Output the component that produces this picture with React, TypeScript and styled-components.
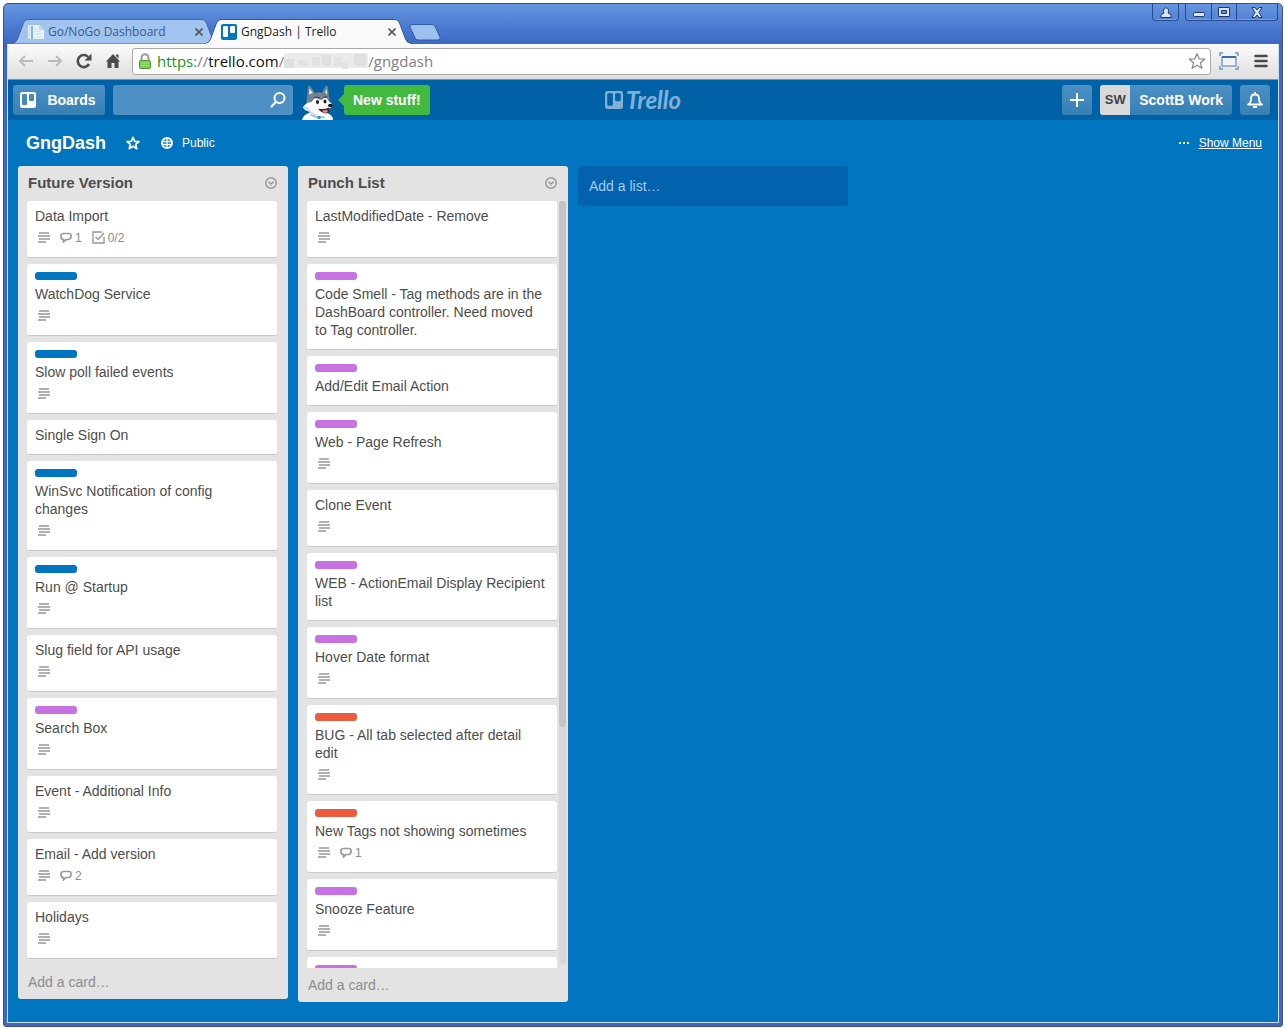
import React from "react";
import styled, { createGlobalStyle } from "styled-components";

const sans = `"Liberation Sans", Arial, sans-serif`;
const chromeFont = `"Open Sans", "Noto Sans", sans-serif`;
const labelColors = { blue: "#0275c0", purple: "#c871e2", red: "#eb5b3f" };
type LabelColor = keyof typeof labelColors;

interface CardData {
  title: string;
  label?: LabelColor;
  desc?: boolean;
  comments?: number;
  checks?: string;
}

const futureCards: CardData[] = [
  { title: "Data Import", desc: true, comments: 1, checks: "0/2" },
  { title: "WatchDog Service", label: "blue", desc: true },
  { title: "Slow poll failed events", label: "blue", desc: true },
  { title: "Single Sign On" },
  { title: "WinSvc Notification of config\nchanges", label: "blue", desc: true },
  { title: "Run @ Startup", label: "blue", desc: true },
  { title: "Slug field for API usage", desc: true },
  { title: "Search Box", label: "purple", desc: true },
  { title: "Event - Additional Info", desc: true },
  { title: "Email - Add version", desc: true, comments: 2 },
  { title: "Holidays", desc: true },
];

const punchCards: CardData[] = [
  { title: "LastModifiedDate - Remove", desc: true },
  {
    title: "Code Smell - Tag methods are in the\nDashBoard controller. Need moved\nto Tag controller.",
    label: "purple",
  },
  { title: "Add/Edit Email Action", label: "purple" },
  { title: "Web - Page Refresh", label: "purple", desc: true },
  { title: "Clone Event", desc: true },
  { title: "WEB - ActionEmail Display Recipient\nlist", label: "purple" },
  { title: "Hover Date format", label: "purple", desc: true },
  { title: "BUG - All tab selected after detail\nedit", label: "red", desc: true },
  { title: "New Tags not showing sometimes", label: "red", desc: true, comments: 1 },
  { title: "Snooze Feature", label: "purple", desc: true },
  { title: "", label: "purple" },
];

const GlobalStyle = createGlobalStyle`
  *, *::before, *::after { box-sizing: border-box; }
  body { margin: 0; background: #fff; font-family: ${sans}; }
  button, input { font: inherit; margin: 0; padding: 0; border: 0; background: none; color: inherit; }
  button { cursor: pointer; }
  svg { display: block; flex: none; }
`;

/* ---------- browser window ---------- */

const Desktop = styled.div`
  height: 100vh;
  padding: 3px 2px 1px 3px;
`;
const Frame = styled.div`
  height: 100%;
  display: flex;
  flex-direction: column;
  padding: 0 3px 3px;
  border: 1px solid #48506a;
  border-radius: 5px 5px 3px 3px;
  background: linear-gradient(#6596e0 0, #4a78d0 24px, #3d69c4 40px, #3d69c4 100%);
`;
const TitleBar = styled.div`
  height: 40px;
  flex: none;
  display: flex;
  align-items: flex-end;
  justify-content: space-between;
  padding: 0 1px 0 5px;
`;
const Tabs = styled.div`
  display: flex;
  align-items: flex-end;
`;
const Tab = styled.div<{ $active?: boolean }>`
  position: relative;
  z-index: ${(p) => (p.$active ? 2 : 1)};
  width: 206px;
  height: 25px;
  margin-right: -13px;
  padding: 0 13px 0 16px;
  display: flex;
  align-items: center;
  gap: 4px;
  font: 12px/24px ${chromeFont};
  color: ${(p) => (p.$active ? "#222" : "#3c5a86")};
`;
const TabShape = styled.svg`
  position: absolute;
  inset: 0;
  z-index: -1;
`;
const TabTitle = styled.span`
  flex: 1;
  white-space: nowrap;
`;
const TabClose = styled.button`
  width: 12px;
  height: 12px;
  display: grid;
  place-items: center;
`;
const NewTab = styled.button`
  align-self: flex-end;
  margin: 0 0 3px 11px;
`;
const WindowControls = styled.div`
  align-self: flex-start;
  display: flex;
  gap: 6px;
`;
const ControlGroup = styled.div`
  display: flex;
  border: 1px solid #284a8c;
  border-top: 0;
  border-radius: 0 0 4px 4px;
  box-shadow: inset 0 -1px 0 #7ba2e2;
`;
const Control = styled.button<{ $wide?: boolean }>`
  width: ${(p) => (p.$wide ? 41 : 25)}px;
  height: 16px;
  display: grid;
  place-items: center;
  & + & {
    border-left: 1px solid #284a8c;
  }
`;
const Viewport = styled.div`
  flex: 1;
  min-height: 0;
  display: flex;
  flex-direction: column;
  border: 1px solid #cfdced;
  border-top: 0;
  background: #0275c0;
`;
const NavBar = styled.div`
  height: 36px;
  flex: none;
  display: flex;
  align-items: center;
  padding: 0 1px 1px 3px;
  border-bottom: 1px solid #8d8d8d;
  background: linear-gradient(#fbfbfb, #dedede);
`;
const NavButton = styled.button`
  width: 29px;
  height: 24px;
  display: grid;
  place-items: center;
`;
const AddressBox = styled.div`
  flex: 1;
  height: 27px;
  margin: 0 2px 0 5px;
  padding: 0 4px 0 5px;
  display: flex;
  align-items: center;
  gap: 5px;
  border: 1px solid #a9a9a9;
  border-radius: 3px;
  background: #fff;
`;
const Url = styled.div`
  flex: 1;
  display: flex;
  align-items: center;
  font: 15px/24px ${chromeFont};
  color: #808080;
  white-space: pre;
`;
const Secure = styled.span`
  color: #159615;
`;
const Host = styled.span`
  color: #111;
`;
const ToolButton = styled.button`
  width: 32px;
  height: 24px;
  display: grid;
  place-items: center;
`;

/* ---------- header ---------- */

const Header = styled.header`
  height: 40px;
  flex: none;
  display: grid;
  grid-template-columns: 1fr auto 1fr;
  align-items: end;
  padding: 0 8px 0 5px;
  background: #0161a7;
`;
const HeaderSide = styled.div<{ $end?: boolean }>`
  height: 35px;
  display: flex;
  align-items: flex-start;
  justify-content: ${(p) => (p.$end ? "flex-end" : "flex-start")};
  gap: 8px;
`;
const HeaderButton = styled.button`
  min-width: 30px;
  height: 30px;
  display: flex;
  align-items: center;
  justify-content: center;
  border-radius: 3px;
  background: linear-gradient(#4c8fc4, #3680b4);
  color: #fff;
  font-weight: bold;
  font-size: 14px;
  overflow: hidden;
`;
const BoardsButton = styled(HeaderButton)`
  gap: 11px;
  padding: 0 8px 0 6px;
  min-width: 92px;
`;
const Initials = styled.span`
  width: 30px;
  line-height: 30px;
  background: #d9d9d9;
  color: #444;
  font-size: 13px;
`;
const MemberName = styled.span`
  padding: 0 9px;
`;
const Search = styled.label`
  width: 180px;
  height: 30px;
  display: flex;
  align-items: center;
  padding: 0 6px 0 8px;
  border-radius: 3px;
  background: #4e8fc4;
`;
const SearchInput = styled.input`
  flex: 1;
  min-width: 0;
  color: #fff;
  font-size: 14px;
  outline: none;
`;
const News = styled.div`
  display: flex;
  gap: 10px;
  padding-left: 1px;
`;
const NewsBubble = styled.button`
  position: relative;
  height: 30px;
  padding: 0 9px;
  border-radius: 3px;
  background: #42b93f;
  color: #fff;
  font-size: 14px;
  font-weight: bold;
  &::before {
    content: "";
    position: absolute;
    left: -6px;
    top: 9px;
    border: 6px solid transparent;
    border-left: 0;
    border-right-color: #42b93f;
  }
`;
const Logo = styled.a`
  height: 40px;
  display: flex;
  align-items: center;
  gap: 3px;
  padding-left: 3px;
  color: #80b0d6;
  font: italic 700 24px/40px Lato, ${sans};
  text-decoration: none;
`;

/* ---------- board ---------- */

const BoardHeader = styled.div`
  height: 46px;
  flex: none;
  display: flex;
  align-items: center;
  padding: 0 16px 0 18px;
  color: #fff;
  font-size: 12px;
`;
const BoardName = styled.h1`
  flex: none;
  margin: 0 20px 0 0;
  font-size: 18px;
`;
const BoardAction = styled.button`
  display: flex;
  align-items: center;
  gap: 9px;
  margin-right: 21px;
`;
const MenuLink = styled.a`
  display: flex;
  align-items: center;
  gap: 10px;
  margin-left: auto;
  color: #fff;
`;
const Lists = styled.main`
  flex: 1;
  min-height: 0;
  display: flex;
  align-items: flex-start;
  gap: 10px;
  padding: 0 10px 20px;
`;
const List = styled.section`
  width: 270px;
  max-height: 100%;
  flex: none;
  display: flex;
  flex-direction: column;
  border-radius: 3px;
  background: #e3e3e3;
  color: #4d4d4d;
  font-size: 14px;
  line-height: 18px;
`;
const ListHeader = styled.div`
  height: 35px;
  flex: none;
  display: flex;
  align-items: center;
  justify-content: space-between;
  padding: 0 11px 2px 10px;
`;
const ListName = styled.h2`
  margin: 0;
  font-size: 15px;
`;
const ListBody = styled.div`
  min-height: 0;
  display: flex;
  gap: 2px;
  padding-left: 9px;
`;
const Cards = styled.div`
  width: 250px;
  overflow: hidden;
`;
const Track = styled.div`
  width: 7px;
  margin-bottom: 4px;
  border-radius: 3px;
  background: #d8d8d8;
`;
const Thumb = styled.div`
  height: 69%;
  border-radius: 3px;
  background: #c4c4c4;
`;
const CardBox = styled.article`
  margin-bottom: 6px;
  padding: 6px 8px 10px;
  border-bottom: 1px solid #c9c9c9;
  border-radius: 3px;
  background: #fff;
`;
const Label = styled.div<{ $color: LabelColor }>`
  width: 42px;
  height: 8px;
  margin: 2px 0 5px;
  border-radius: 3px;
  background: ${(p) => labelColors[p.$color]};
`;
const CardTitle = styled.div`
  min-height: 18px;
  white-space: pre-line;
`;
const Badges = styled.div`
  height: 22px;
  display: flex;
  align-items: center;
  gap: 10px;
  padding: 3px 3px 0;
`;
const Badge = styled.span`
  display: flex;
  align-items: center;
  gap: 3px;
  color: #8c8c8c;
  font-size: 12px;
`;
const AddCard = styled.button`
  height: 34px;
  flex: none;
  padding: 0 10px;
  text-align: left;
  color: #8c8c8c;
`;
const AddList = styled.button`
  width: 270px;
  height: 40px;
  padding: 0 11px;
  border-radius: 3px;
  background: #0262ae;
  color: #a3cbe9;
  font-size: 14px;
  text-align: left;
`;

/* ---------- drawings ---------- */

const TabBackground = ({ active }: { active?: boolean }) => (
  <TabShape width="206" height="25" viewBox="0 0 206 25" aria-hidden="true">
    <path
      d="M0 25 Q4 24 5.500 20 L11.500 4 Q13 .5 16 .5 H190 Q193 .5 194.500 4 L200.500 20 Q202 24 206 25 Z"
      fill={active ? "#fafafa" : "#a0c3f0"}
      stroke={active ? "#35559a" : "#3e66a8"}
    />
    {active && <path d="M1 24.500 H205" stroke="#fafafa" />}
  </TabShape>
);

const Cross = () => (
  <svg width="8" height="8" viewBox="0 0 8 8">
    <path d="M.5 .5 L7.500 7.500 M7.500 .5 L.5 7.500" stroke="#555" strokeWidth="1.600" />
  </svg>
);

const PageIcon = () => (
  <svg width="16" height="16" viewBox="0 0 16 16">
    <path d="M0 1h11l5 5v9H0z" fill="#e9f1fa" />
    <path d="M1 1h1v14H1z" fill="#c3dcf2" />
    <path d="M3 2h2v13H3z" fill="#7fb5e0" />
    <path d="M7 4h4M7 7h6M7 10h6M7 13h6" stroke="#d8dee5" />
    <path d="M11 1v5h5z" fill="#cfd8e2" />
  </svg>
);

const TrelloMark = ({ size, front, back }: { size: number; front: string; back: string }) => (
  <svg width={size} height={size} viewBox="0 0 16 16">
    <rect width="16" height="16" rx="2" fill={front} />
    <rect x="2" y="2" width="5" height="11" rx="1" fill={back} />
    <rect x="9" y="2" width="5" height="7" rx="1" fill={back} />
  </svg>
);

const Arrow = ({ flip }: { flip?: boolean }) => (
  <svg width="16" height="14" viewBox="0 0 16 14">
    <path
      d={flip ? "M1 7H14M9 2 L14 7 L9 12" : "M15 7H2M7 2 L2 7 L7 12"}
      fill="none"
      stroke="#bcbcbc"
      strokeWidth="2"
    />
  </svg>
);

const Reload = () => (
  <svg width="16" height="16" viewBox="0 0 16 16">
    <path d="M13 11 A6 6 0 1 1 12 3.800" fill="none" stroke="#4c4c4c" strokeWidth="2.600" />
    <path d="M15.500 .5v7h-7z" fill="#4c4c4c" />
  </svg>
);

const Home = () => (
  <svg width="16" height="16" viewBox="0 0 16 16">
    <path d="M8 1 L15 8.500 H13.500 V15 H9.500 V10 H6.500 V15 H2.500 V8.500 H1 Z M11 1.500h2.500v4L11 3z" fill="#4c4c4c" />
  </svg>
);

const Lock = () => (
  <svg width="14" height="16" viewBox="0 0 14 16">
    <path d="M3.500 8V4.800a3.500 3.500 0 0 1 7 0V8" fill="none" stroke="#9a9a9a" strokeWidth="2" />
    <rect x="1.500" y="7.500" width="11" height="8" rx="1" fill="#7ecb55" stroke="#4f9a36" />
    <path d="M3 10h8M3 12.500h8" stroke="#a6e084" />
  </svg>
);

const Redacted = () => (
  <svg width="84" height="20" viewBox="0 0 84 20" aria-hidden="true">
    <path d="M0 2h84v15H0z" fill="#ebebeb" />
    <path d="M0 8h10v9H0zM38 4h9v11h-9zM70 3h12v12H70z" fill="#dfdfdf" />
    <path d="M14 9h10v6H14zM28 6h8v9h-8zM50 6h8v9h-8zM58 12h6v6h-6z" fill="#e3e3e3" />
  </svg>
);

const Star = ({ size, color, width }: { size: number; color: string; width: number }) => (
  <svg width={size} height={size} viewBox="0 0 20 20">
    <path
      d="M10 1.800 L12.400 7.600 L18.600 8 L13.800 12 L15.400 18.100 L10 14.700 L4.600 18.100 L6.200 12 L1.400 8 L7.600 7.600 Z"
      fill="none"
      stroke={color}
      strokeWidth={width}
      strokeLinejoin="round"
    />
  </svg>
);

const Capture = () => (
  <svg width="20" height="18" viewBox="0 0 20 18">
    <path d="M1 4V1h3M16 1h3v3M19 14v3h-3M4 17H1v-3" fill="none" stroke="#6f97c8" strokeWidth="1.500" />
    <path d="M3 4.500h14v9.500H3z" fill="#f2f2f2" stroke="#4a79b5" />
    <path d="M3 5h14" stroke="#3f6dab" strokeWidth="2" />
  </svg>
);

const MenuBars = () => (
  <svg width="14" height="14" viewBox="0 0 14 14">
    <path d="M1.500 2h11M1.500 7h11M1.500 12h11" stroke="#4a4a4a" strokeWidth="2.600" strokeLinecap="round" />
  </svg>
);

const Magnifier = () => (
  <svg width="18" height="18" viewBox="0 0 18 18">
    <circle cx="10.500" cy="7" r="5" fill="none" stroke="#fff" strokeWidth="2" />
    <path d="M7 10.800 L2 16" stroke="#fff" strokeWidth="2.200" />
  </svg>
);

const Husky = () => (
  <svg width="32" height="35" viewBox="0 0 32 35" role="img" aria-label="Husky">
    <path d="M0 35 Q1 30 7 28 L12 25 L25 28 Q31 30 31 35 Z" fill="#fff" />
    <path d="M5 12 L6 1 Q7 -.5 9 2 L13 8 Q17 6.500 20 8 L23 2 Q25 -.5 26 2 L27 12 Q28 15 27 18 L22 24 L9 24 Q3 20 5 12 Z" fill="#74818e" />
    <path d="M7 9.500 L7.500 3.500 L11 8 Z M23 7.500 L24.800 4 L25.300 9.500 Z" fill="#e3e8ed" />
    <path d="M1 22 Q3 19 6 17.500 Q9 18 10.500 16 Q12 12.500 15 13.500 Q18 15 20 15 Q22 12 25 13.500 Q26 16 29 18 Q32 20 30 22 L26 24 Q26 30 22 31 Q12 31 6 26 Q2 25 1 22 Z" fill="#fff" />
    <path d="M1 22 Q3 21 6 22 Q9 28 17 30 Q10 30 6 26 Q2 25 1 22 Z" fill="#d3dde6" />
    <path d="M16 23.500 Q22 25 27 22.500 Q28 28 24 28.500 Q19 28 16 23.500 Z" fill="#3a2b31" />
    <path d="M20 26 Q23 24.500 26 25.500 Q25.500 28 23 28 Q21 27.500 20 26 Z" fill="#e8848c" />
    <ellipse cx="15.500" cy="17" rx="1.600" ry="2" fill="#222" />
    <ellipse cx="23" cy="16.500" rx="1.500" ry="1.900" fill="#222" />
    <path d="M12.500 13 Q15 11 17.500 13 M21.500 12.500 Q23.500 11 25.500 12.500" stroke="#39434e" strokeWidth="1.200" fill="none" />
    <ellipse cx="28.500" cy="20.500" rx="2.500" ry="1.800" fill="#161616" />
    <path d="M9 28.500 Q15 32 22 31 L23 33 Q15 34.500 8 30.500 Z" fill="#9cc5e6" />
    <circle cx="17" cy="32.500" r="1.800" fill="#4b8fc6" />
  </svg>
);

const Bell = () => (
  <svg width="18" height="18" viewBox="0 0 18 18">
    <path d="M2 13.500 Q5 12 5 7.500 Q5 3.500 9 3.500 Q13 3.500 13 7.500 Q13 12 16 13.500 Z" fill="none" stroke="#fff" strokeWidth="1.800" strokeLinejoin="round" />
    <path d="M9 1v3M7 16h4" stroke="#fff" strokeWidth="2" />
  </svg>
);

const Plus = () => (
  <svg width="14" height="14" viewBox="0 0 14 14">
    <path d="M7 0v14M0 7h14" stroke="#fff" strokeWidth="2" />
  </svg>
);

const Globe = () => (
  <svg width="12" height="12" viewBox="0 0 12 12">
    <circle cx="6" cy="6" r="5" fill="none" stroke="#fff" strokeWidth="2" />
    <path d="M6 1v10M1 4.500h10M1 7.500h10" stroke="#fff" strokeWidth="1.300" />
  </svg>
);

const Dots = () => (
  <svg width="10" height="2" viewBox="0 0 10 2">
    <path d="M0 0h2v2H0zM4 0h2v2H4zM8 0h2v2H8z" fill="#fff" />
  </svg>
);

const ListMenuIcon = () => (
  <svg width="12" height="12" viewBox="0 0 12 12">
    <circle cx="6" cy="6" r="5.200" fill="none" stroke="#999" strokeWidth="1.500" />
    <path d="M3.500 4.800 L6 7 L8.500 4.800 M6 6.500v2" fill="none" stroke="#999" strokeWidth="1.500" />
  </svg>
);

const DescIcon = () => (
  <svg width="12" height="11" viewBox="0 0 12 11">
    <path d="M1 1h10M0 4h12M1 7h11M0 10h8" stroke="#969696" strokeWidth="1.600" />
  </svg>
);

const CommentIcon = () => (
  <svg width="12" height="11" viewBox="0 0 12 11">
    <path d="M4 1.500 H9 Q11 1.500 11 3.500 V5 Q11 7 9 7.500 H6 L3.500 9.800 V7.500 Q1 7.500 1 5 V3.500 Q1 1.500 4 1.500 Z" fill="none" stroke="#999" strokeWidth="1.700" />
  </svg>
);

const CheckIcon = () => (
  <svg width="13" height="13" viewBox="0 0 13 13">
    <path d="M10 1 H1 V12 H12 V6" fill="none" stroke="#999" strokeWidth="1.400" />
    <path d="M3.500 6 L6 8.500 L12 2" fill="none" stroke="#999" strokeWidth="1.500" />
  </svg>
);

/* ---------- pieces ---------- */

const Card = ({ card }: { card: CardData }) => (
  <CardBox>
    {card.label && <Label $color={card.label} />}
    <CardTitle>{card.title}</CardTitle>
    {card.desc && (
      <Badges>
        <Badge><DescIcon /></Badge>
        {card.comments && <Badge><CommentIcon />{card.comments}</Badge>}
        {card.checks && <Badge><CheckIcon />{card.checks}</Badge>}
      </Badges>
    )}
  </CardBox>
);

const CardList = ({ name, cards, scrolls }: { name: string; cards: CardData[]; scrolls?: boolean }) => (
  <List>
    <ListHeader>
      <ListName>{name}</ListName>
      <button aria-label="List actions"><ListMenuIcon /></button>
    </ListHeader>
    <ListBody>
      <Cards>{cards.map((card, i) => <Card key={i} card={card} />)}</Cards>
      {scrolls && <Track><Thumb /></Track>}
    </ListBody>
    <AddCard>Add a card…</AddCard>
  </List>
);

const BrowserTop = () => (
  <TitleBar>
    <Tabs>
      <Tab>
        <TabBackground />
        <PageIcon />
        <TabTitle>Go/NoGo Dashboard</TabTitle>
        <TabClose aria-label="Close tab"><Cross /></TabClose>
      </Tab>
      <Tab $active>
        <TabBackground active />
        <TrelloMark size={16} front="#0275c0" back="#fff" />
        <TabTitle>GngDash | Trello</TabTitle>
        <TabClose aria-label="Close tab"><Cross /></TabClose>
      </Tab>
      <NewTab aria-label="New tab">
        <svg width="32" height="17" viewBox="0 0 32 17">
          <path d="M3 .5 H23 Q25 .5 26 2.500 L31 13 Q32 16 29 16 H9 Q7 16 6 14 L1 3 Q0 .5 3 .5Z" fill="#9dc0ee" stroke="#335a9e" />
        </svg>
      </NewTab>
    </Tabs>
    <WindowControls>
      <ControlGroup>
        <Control aria-label="Profile">
          <svg width="12" height="11" viewBox="0 0 12 11">
            <path d="M1 10.500 V8.500 Q1.500 6.500 4 6 Q3 5 3.500 3 Q4 .8 6 .8 Q8 .8 8.500 3 Q9 5 8 6 Q10.500 6.500 11 8.500 V10.500 Z" fill="#d5e4f8" stroke="#20396b" />
          </svg>
        </Control>
      </ControlGroup>
      <ControlGroup>
        <Control aria-label="Minimize">
          <svg width="12" height="10" viewBox="0 0 12 10">
            <rect x=".5" y="5.500" width="11" height="4" rx="1" fill="#d5e4f8" stroke="#20396b" />
          </svg>
        </Control>
        <Control aria-label="Maximize">
          <svg width="12" height="10" viewBox="0 0 12 10">
            <path d="M.5 .5h11v9H.5z M3.500 3.500v3h5v-3z" fill="#d5e4f8" fillRule="evenodd" stroke="#20396b" />
          </svg>
        </Control>
        <Control $wide aria-label="Close">
          <svg width="12" height="11" viewBox="0 0 12 11">
            <path d="M1 .5h3L6 3l2-2.500h3L8 5.500l3 5H8L6 8l-2 2.500H1l3-5z" fill="#d5e4f8" stroke="#20396b" />
          </svg>
        </Control>
      </ControlGroup>
    </WindowControls>
  </TitleBar>
);

const BrowserNav = () => (
  <NavBar>
    <NavButton aria-label="Back"><Arrow /></NavButton>
    <NavButton aria-label="Forward"><Arrow flip /></NavButton>
    <NavButton aria-label="Reload"><Reload /></NavButton>
    <NavButton aria-label="Home"><Home /></NavButton>
    <AddressBox>
      <Lock />
      <Url>
        <Secure>https</Secure>://<Host>trello.com</Host>/<Redacted />/gngdash
      </Url>
      <button aria-label="Bookmark"><Star size={18} color="#8a8a8a" width={1.4} /></button>
    </AddressBox>
    <ToolButton aria-label="Capture"><Capture /></ToolButton>
    <ToolButton aria-label="Browser menu"><MenuBars /></ToolButton>
  </NavBar>
);

export default function App() {
  return (
    <Desktop>
      <GlobalStyle />
      <Frame>
        <BrowserTop />
        <Viewport>
          <BrowserNav />
          <Header>
            <HeaderSide>
              <BoardsButton>
                <TrelloMark size={16} front="#fff" back="#4789bf" />
                Boards
              </BoardsButton>
              <Search>
                <SearchInput type="text" aria-label="Search" />
                <Magnifier />
              </Search>
              <News>
                <Husky />
                <div><NewsBubble>New stuff!</NewsBubble></div>
              </News>
            </HeaderSide>
            <Logo href="#">
              <TrelloMark size={18} front="#80b0d6" back="#0161a7" />
              Trello
            </Logo>
            <HeaderSide $end>
              <HeaderButton aria-label="Add"><Plus /></HeaderButton>
              <HeaderButton>
                <Initials>SW</Initials>
                <MemberName>ScottB Work</MemberName>
              </HeaderButton>
              <HeaderButton aria-label="Notifications"><Bell /></HeaderButton>
            </HeaderSide>
          </Header>
          <BoardHeader>
            <BoardName>GngDash</BoardName>
            <BoardAction aria-label="Star board"><Star size={14} color="#fff" width={2.4} /></BoardAction>
            <BoardAction><Globe />Public</BoardAction>
            <MenuLink href="#"><Dots />Show Menu</MenuLink>
          </BoardHeader>
          <Lists>
            <CardList name="Future Version" cards={futureCards} />
            <CardList name="Punch List" cards={punchCards} scrolls />
            <AddList>Add a list…</AddList>
          </Lists>
        </Viewport>
      </Frame>
    </Desktop>
  );
}
